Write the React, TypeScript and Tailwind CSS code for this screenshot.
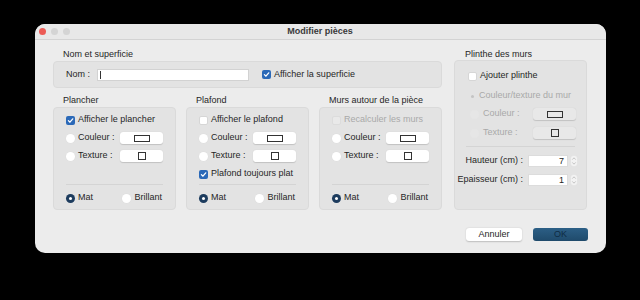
import React from "react";

function Checkbox({ checked = false, disabled = false }: { checked?: boolean; disabled?: boolean }) {
  if (checked) {
    return (
      <span className="w-[9px] h-[9px] rounded-[2px] bg-[#2b69b8] flex items-center justify-center shrink-0">
        <svg width="7" height="7" viewBox="0 0 10 10">
          <path d="M2 5.2 L4.2 7.4 L8.2 2.6" fill="none" stroke="white" strokeWidth="1.8" strokeLinecap="round" strokeLinejoin="round" />
        </svg>
      </span>
    );
  }
  return (
    <span
      className={
        "w-[9px] h-[9px] rounded-[2px] shrink-0 border " +
        (disabled ? "bg-[#e9e9e9] border-[#dcdcdc]" : "bg-white border-[#d6d6d6]")
      }
    />
  );
}

function Radio({ checked = false, disabled = false }: { checked?: boolean; disabled?: boolean }) {
  if (checked) {
    return (
      <span className="w-[9px] h-[9px] rounded-full bg-[#1d3c5e] flex items-center justify-center shrink-0">
        <span className="w-[3px] h-[3px] rounded-full bg-white" />
      </span>
    );
  }
  return (
    <span
      className={
        "w-[9px] h-[9px] rounded-full shrink-0 " +
        (disabled ? "bg-[#e6e6e6]" : "bg-white shadow-[0_0_0_0.5px_#dedede]")
      }
    />
  );
}

function Swatch({ kind, disabled = false }: { kind: "color" | "texture"; disabled?: boolean }) {
  return (
    <span
      className={
        "w-[43px] h-[12px] rounded-[3px] flex items-center justify-center shadow-[0_0.5px_1px_rgba(0,0,0,0.15)] " +
        (disabled ? "bg-[#e8e8e8]" : "bg-white")
      }
    >
      {kind === "color" ? (
        <span className="w-[16px] h-[7px] border border-[#333]" />
      ) : (
        <span className="w-[8px] h-[8px] border border-[#333]" />
      )}
    </span>
  );
}

function Row({ children, className = "" }: { children: React.ReactNode; className?: string }) {
  return <div className={"h-[18px] flex items-center whitespace-nowrap " + className}>{children}</div>;
}

function PanelBox({
  title,
  check,
  extra,
}: {
  title: string;
  check: React.ReactNode;
  extra?: React.ReactNode;
}) {
  return (
    <div className="flex flex-col flex-1">
      <div className="h-[11px] leading-[11px] pl-[10px] mb-[1px]">{title}</div>
      <div className="bg-[#e3e3e3] rounded-[4px] border border-[#dadada] px-[12px] pt-[3px] pb-[3px] h-[103px]">
        {check}
        <Row className="justify-between">
          <div className="flex items-center gap-[3px]">
            <Radio />
            <span>Couleur :</span>
          </div>
          <Swatch kind="color" />
        </Row>
        <Row className="justify-between">
          <div className="flex items-center gap-[3px]">
            <Radio />
            <span>Texture :</span>
          </div>
          <Swatch kind="texture" />
        </Row>
        <Row>{extra}</Row>
        <div className="h-px bg-[#d4d4d4] mt-[1px] mb-[4px]" />
        <Row className="justify-between">
          <div className="flex items-center gap-[3px]">
            <Radio checked />
            <span>Mat</span>
          </div>
          <div className="flex items-center gap-[3px] pr-[1px]">
            <Radio />
            <span>Brillant</span>
          </div>
        </Row>
      </div>
    </div>
  );
}

function Spin({ value }: { value: string }) {
  return (
    <div className="flex items-center gap-[2px]">
      <div className="w-[40px] h-[12px] bg-white border border-[#dcdcdc] text-right pr-[3px] leading-[10px]">{value}</div>
      <svg width="8" height="12" viewBox="0 0 8 12">
        <rect x="0.5" y="0.5" width="7" height="11" rx="3" fill="#f3f3f3" stroke="#dcdcdc" strokeWidth="0.5" />
        <path d="M2.3 4.6 L4 2.8 L5.7 4.6" fill="none" stroke="#b8b8b8" strokeWidth="0.8" />
        <path d="M2.3 7.4 L4 9.2 L5.7 7.4" fill="none" stroke="#b8b8b8" strokeWidth="0.8" />
      </svg>
    </div>
  );
}

export default function App() {
  return (
    <div
      className="w-[640px] h-[300px] bg-black pt-[24px] pl-[35px] text-[9px] text-[#262626]"
      style={{ fontFamily: '"Liberation Sans", Arial, sans-serif' }}
    >
      <div className="w-[571px] h-[229px] bg-[#ececec] rounded-[10px] overflow-hidden flex flex-col">
        {/* Title bar */}
        <div className="h-[16px] bg-[#e8e8e8] border-b border-[#d3d3d3] flex items-center shrink-0">
          <div className="flex items-center gap-[5px] pl-[4px]">
            <span className="w-[7px] h-[7px] rounded-full bg-[#ec5b55]" />
            <span className="w-[7px] h-[7px] rounded-full bg-[#d4d4d4]" />
            <span className="w-[7px] h-[7px] rounded-full bg-[#d4d4d4]" />
          </div>
          <div className="flex-1 text-center font-bold text-[#3a3a3a] pr-[36px]">Modifier pièces</div>
        </div>

        {/* Body */}
        <div className="flex gap-[12px] pl-[18px] pr-[19px] pt-[9px]">
          {/* Left column */}
          <div className="w-[389px] flex flex-col">
            <div className="h-[11px] leading-[11px] pl-[10px] mb-[1px]">Nom et superficie</div>
            <div className="h-[27px] bg-[#e3e3e3] rounded-[4px] border border-[#dadada] flex items-center pl-[12px]">
              <span>Nom :</span>
              <div className="ml-[7px] w-[152px] h-[12px] bg-white border border-[#d2d2d2] flex items-center pl-[2px]">
                <span className="w-px h-[8px] bg-[#333]" />
              </div>
              <div className="ml-[13px] flex items-center gap-[3px]">
                <Checkbox checked />
                <span>Afficher la superficie</span>
              </div>
            </div>

            <div className="flex gap-[10px] mt-[7px]">
              <PanelBox
                title="Plancher"
                check={
                  <Row className="gap-[3px]">
                    <Checkbox checked />
                    <span>Afficher le plancher</span>
                  </Row>
                }
              />
              <PanelBox
                title="Plafond"
                check={
                  <Row className="gap-[3px]">
                    <Checkbox />
                    <span>Afficher le plafond</span>
                  </Row>
                }
                extra={
                  <div className="flex items-center gap-[3px]">
                    <Checkbox checked />
                    <span>Plafond toujours plat</span>
                  </div>
                }
              />
              <PanelBox
                title="Murs autour de la pièce"
                check={
                  <Row className="gap-[3px] text-[#a9a9a9]">
                    <Checkbox disabled />
                    <span>Recalculer les murs</span>
                  </Row>
                }
              />
            </div>
          </div>

          {/* Right column */}
          <div className="w-[133px] flex flex-col">
            <div className="h-[11px] leading-[11px] pl-[11px]">Plinthe des murs</div>
            <div className="h-[150px] bg-[#e3e3e3] rounded-[4px] border border-[#dadada] pl-[8px] pr-[8px] pt-[6px]">
              <Row className="gap-[3px] pl-[5px]">
                <Checkbox />
                <span>Ajouter plinthe</span>
              </Row>
              <Row className="gap-[5px] pl-[8px] mt-[2px] text-[#a9a9a9]">
                <span className="w-[3px] h-[3px] rounded-full bg-[#c4c4c4]" />
                <span>Couleur/texture du mur</span>
              </Row>
              <Row className="justify-between text-[#a9a9a9] pl-[7px] pr-[2px]">
                <div className="flex items-center gap-[4px]">
                  <Radio disabled />
                  <span>Couleur :</span>
                </div>
                <Swatch kind="color" disabled />
              </Row>
              <Row className="justify-between text-[#a9a9a9] pl-[7px] pr-[2px] mt-[1px]">
                <div className="flex items-center gap-[4px]">
                  <Radio disabled />
                  <span>Texture :</span>
                </div>
                <Swatch kind="texture" disabled />
              </Row>
              <div className="h-px bg-[#d4d4d4] mx-[3px] mt-[4px] mb-[5px]" />
              <Row className="justify-end">
                <span className="mr-[5px]">Hauteur (cm) :</span>
                <Spin value="7" />
              </Row>
              <Row className="justify-end mt-[1px]">
                <span className="mr-[5px]">Epaisseur (cm) :</span>
                <Spin value="1" />
              </Row>
            </div>
          </div>
        </div>

        {/* Buttons */}
        <div className="flex justify-end gap-[11px] pr-[18px] mt-[18px]">
          <button className="w-[56px] h-[13px] bg-white rounded-[3px] shadow-[0_0.5px_1.5px_rgba(0,0,0,0.2)] leading-[13px] text-[#262626]">
            Annuler
          </button>
          <button className="w-[55px] h-[13px] rounded-[3px] bg-gradient-to-b from-[#2c5f86] to-[#1f4a6b] leading-[13px] text-[#0f2c44]">
            OK
          </button>
        </div>
      </div>
    </div>
  );
}
